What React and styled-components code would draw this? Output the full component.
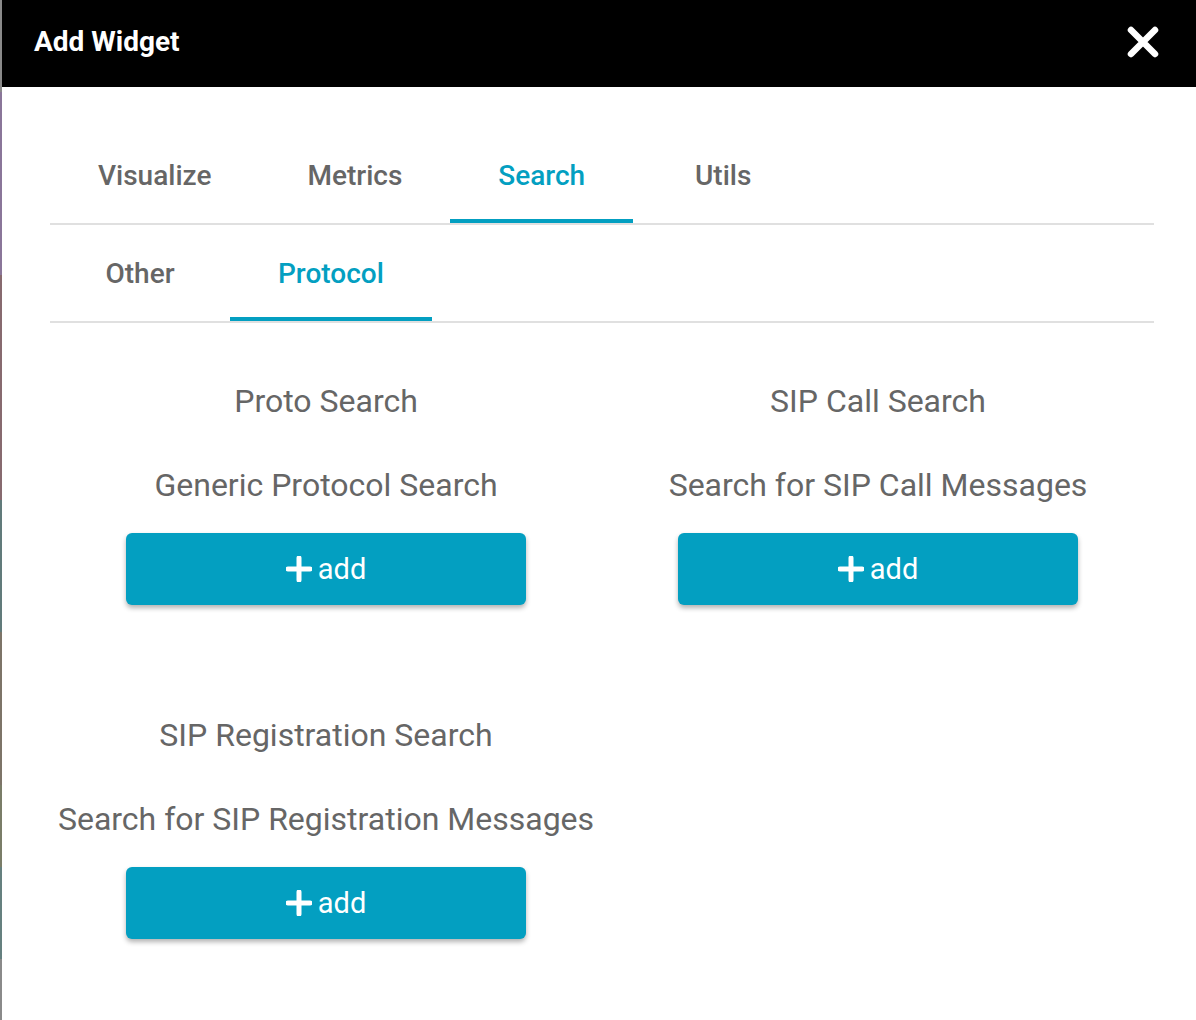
import React, { useState } from "react"
import styled, { createGlobalStyle } from "styled-components"

const GlobalStyle = createGlobalStyle`
  html, body {
    margin: 0;
    padding: 0;
    background: #fff;
    font-family: Roboto, "Noto Sans", sans-serif;
  }
`

const Page = styled.div`
  display: flex;
  width: 1196px;
  min-height: 1020px;
`

const Backdrop = styled.div`
  width: 2px;
  background: linear-gradient(
    #8a8a8a 0 9%,
    #8a7699 9% 27%,
    #876a6f 27% 49%,
    #617b7b 49% 62%,
    #7d7468 62% 77%,
    #7a7d68 77% 85%,
    #65807f 85% 94%,
    #8a8a8a 94% 100%
  );
`

const Dialog = styled.div`
  flex: 1;
  display: flex;
  flex-direction: column;
`

const Header = styled.header`
  height: 87px;
  background: #000;
  display: flex;
  align-items: center;
  justify-content: space-between;
  padding: 0 36px 4px 32px;
  box-sizing: border-box;
`

const Title = styled.h2`
  margin: 0;
  color: #fff;
  font-size: 28px;
  font-weight: 700;
`

const CloseButton = styled.button`
  background: none;
  border: 0;
  padding: 0;
  display: flex;
  cursor: pointer;
`

const Body = styled.div`
  padding: 40px 42px 0 48px;
`

const TabBar = styled.div`
  display: flex;
  border-bottom: 2px solid #e0e0e0;
`

const Tab = styled.button`
  height: 96px;
  min-width: 180px;
  padding: 4px 48px 0;
  background: none;
  border: 0;
  border-bottom: 4px solid ${({ $active }) => ($active ? "#039fc1" : "transparent")};
  box-sizing: border-box;
  font-family: Roboto, sans-serif;
  font-size: 28px;
  font-weight: 500;
  color: ${({ $active }) => ($active ? "#039fc1" : "#666")};
  cursor: pointer;
`

const Grid = styled.div`
  display: grid;
  grid-template-columns: 1fr 1fr;
`

const Card = styled.div`
  display: flex;
  flex-direction: column;
  align-items: center;
  padding: 60px 0 52px;
  color: #666;
  text-align: center;
`

const CardTitle = styled.div`
  font-size: 32px;
  line-height: 36px;
`

const CardText = styled.div`
  margin-top: 48px;
  font-size: 32px;
  line-height: 36px;
`

const AddButton = styled.button`
  margin-top: 30px;
  width: 400px;
  height: 72px;
  border: 0;
  border-radius: 6px;
  background: #039fc1;
  color: #fff;
  font-family: Roboto, sans-serif;
  font-size: 29px;
  display: flex;
  align-items: center;
  justify-content: center;
  gap: 6px;
  box-shadow: 0 3px 5px rgba(0, 0, 0, 0.3);
  cursor: pointer;
`

const Plus = () => (
  <svg width="26" height="26" viewBox="0 0 26 26">
    <path d="M13 2v22M2 13h22" stroke="#fff" strokeWidth="5" strokeLinecap="round" />
  </svg>
)

const tabs = ["Visualize", "Metrics", "Search", "Utils"]
const subTabs = ["Other", "Protocol"]

const widgets = [
  { title: "Proto Search", text: "Generic Protocol Search" },
  { title: "SIP Call Search", text: "Search for SIP Call Messages" },
  { title: "SIP Registration Search", text: "Search for SIP Registration Messages" },
]

const App = () => {
  const [tab, setTab] = useState("Search")
  const [subTab, setSubTab] = useState("Protocol")

  return (
    <Page>
      <GlobalStyle />
      <Backdrop />
      <Dialog>
        <Header>
          <Title>Add Widget</Title>
          <CloseButton>
            <svg width="34" height="34" viewBox="0 0 34 34">
              <path d="M5 5l24 24M29 5L5 29" stroke="#fff" strokeWidth="6.5" strokeLinecap="round" />
            </svg>
          </CloseButton>
        </Header>
        <Body>
          <TabBar>
            {tabs.map((t) => (
              <Tab key={t} $active={t === tab} onClick={() => setTab(t)}>
                {t}
              </Tab>
            ))}
          </TabBar>
          <TabBar>
            {subTabs.map((t) => (
              <Tab key={t} $active={t === subTab} onClick={() => setSubTab(t)}>
                {t}
              </Tab>
            ))}
          </TabBar>
          <Grid>
            {widgets.map((w) => (
              <Card key={w.title}>
                <CardTitle>{w.title}</CardTitle>
                <CardText>{w.text}</CardText>
                <AddButton>
                  <Plus />
                  add
                </AddButton>
              </Card>
            ))}
          </Grid>
        </Body>
      </Dialog>
    </Page>
  )
}

export default App
